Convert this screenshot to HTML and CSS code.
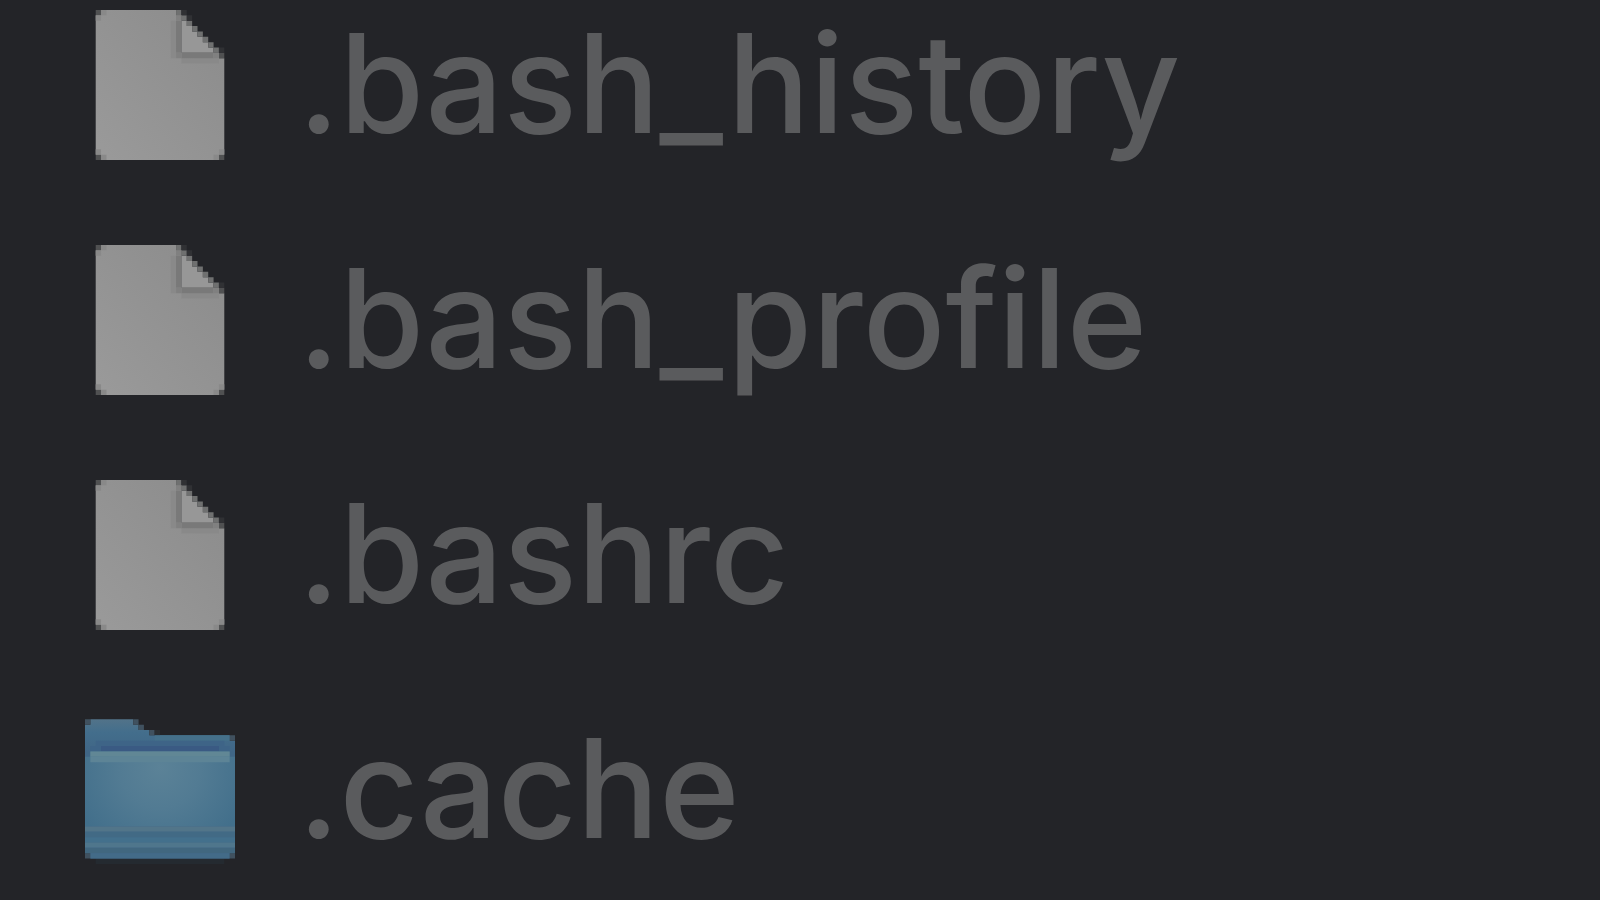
FILE: index.html
```html
<!DOCTYPE html>
<html lang="en">
<head>
<meta charset="utf-8">
<title>Files</title>
<link rel="stylesheet" href="styles.css">
</head>
<body>
<svg class="defs" width="0" height="0" aria-hidden="true">
  <defs>
    <linearGradient id="paper" x1="0" y1="1" x2="1" y2="0">
      <stop offset="0" stop-color="#9a9a9a"/>
      <stop offset="1" stop-color="#8b8b8b"/>
    </linearGradient>
    <linearGradient id="back" x1="0" y1="0" x2="0" y2="6" gradientUnits="userSpaceOnUse">
      <stop offset="0" stop-color="#527389"/>
      <stop offset=".4" stop-color="#436e8c"/>
      <stop offset="1" stop-color="#406686"/>
    </linearGradient>
    <radialGradient id="front" cx="14" cy="9" r="17" gradientUnits="userSpaceOnUse">
      <stop offset="0" stop-color="#5b8297"/>
      <stop offset=".45" stop-color="#527b93"/>
      <stop offset="1" stop-color="#426f8b"/>
    </radialGradient>
    <symbol id="doc" viewBox="0 0 24 28">
      <path fill="url(#paper)" d="M1 0H15V1H16V8H23V9H24V27H23V28H1V27H0V1H1Z"/>
      <path fill="#505152" d="M0 0h1v1H0zM0 27h1v1H0zM23 27h1v1h-1zM23 8h1v1h-1z"/>
      <path fill="#898989" d="M0 1h1v1H0zM1 0h1v1H1zM0 26h1v1H0zM1 27h1v1H1zM23 26h1v1h-1zM22 27h1v1h-1zM14 2h1v7h-1zM16 9h7v1h-7z"/>
      <path fill="#979797" d="M16 2h1v1h1v1h1v1h1v1h1v1h1v1h-6z"/>
      <path fill="#6f7070" d="M15 0h1v1h-1zM16 1h1v1h-1zM17 2h1v1h-1zM18 3h1v1h-1zM19 4h1v1h-1zM20 5h1v1h-1zM21 6h1v1h-1zM22 7h1v1h-1z"/>
      <path fill="#303134" d="M16 0h1v1h-1zM17 1h1v1h-1zM23 7h1v1h-1z"/>
      <path fill="#797979" d="M15 2h1v6h-1zM16 8h6v1h-6z"/>
      <path fill="#808080" d="M15 1h1v1h-1zM15 8h1v1h-1zM22 8h1v1h-1z"/>
    </symbol>
    <symbol id="folder" viewBox="0 -0.8 28 28">
      <path fill="#242a30" d="M2 26h24v1H2z"/>
      <path fill="url(#back)" d="M1 0H9V1H10V2H12V3H27V4H28V25H27V26H1V25H0V1H1Z"/>
      <path fill="#40515f" d="M0 0h1v1H0zM9 0h1v1H9zM10 1h1v1h-1zM12 2h1v1h-1zM27 3h1v1h-1zM0 25h1v1H0zM27 25h1v1h-1z"/>
      <path fill="#2a2d31" d="M13 2h1v1h-1z"/>
      <path fill="#45708a" d="M13 3h14v1H13z"/>
      <path fill="#3e6487" d="M2 4h24v1H2zM1 5h26v1H1z"/>
      <path fill="#3a5a83" d="M3 5h22v1H3z"/>
      <path fill="url(#front)" d="M1 6h26v1h1v13H0V7h1z"/>
      <path fill="#618795" d="M1 6h26v1H1z"/>
      <path fill="#5d8496" d="M1 7h26v1H1z"/>
      <path fill="#527589" d="M0 20h28v1H0z"/>
      <path fill="#426a85" d="M0 21h28v1H0z"/>
      <path fill="#43708c" d="M0 22h28v1H0z"/>
      <path fill="#4f768c" d="M0 23h28v1H0z"/>
      <path fill="#41677f" d="M0 24h28v1H0z"/>
      <path fill="#436b88" d="M1 25h26v1H1z"/>
    </symbol>
  </defs>
</svg>
<main>
  <ul class="files">
    <li class="file"><svg class="icon" aria-hidden="true"><use href="#doc"/></svg><span class="name">.bash_history</span></li>
    <li class="file"><svg class="icon" aria-hidden="true"><use href="#doc"/></svg><span class="name">.bash_profile</span></li>
    <li class="file"><svg class="icon" aria-hidden="true"><use href="#doc"/></svg><span class="name">.bashrc</span></li>
    <li class="file"><svg class="icon" aria-hidden="true"><use href="#folder"/></svg><span class="name">.cache</span></li>
  </ul>
</main>
</body>
</html>
```
FILE: styles.css
```css
body {
  margin: 0;
  background: #232428;
  color: #5a5b5d;
  font-family: Inter, "Liberation Sans", sans-serif;
}

.defs {
  display: block;
}

.files {
  display: flex;
  flex-direction: column;
  gap: 85px;
  margin: 0;
  padding: 10px 0 0 85px;
  list-style: none;
}

.file {
  display: flex;
  align-items: center;
  gap: 63px;
  height: 150px;
}

.icon {
  flex: none;
  width: 150px;
  height: 150px;
}

.name {
  padding-bottom: 4px;
  font-size: 137px;
  font-weight: 500;
  line-height: 150px;
  white-space: nowrap;
}
```
